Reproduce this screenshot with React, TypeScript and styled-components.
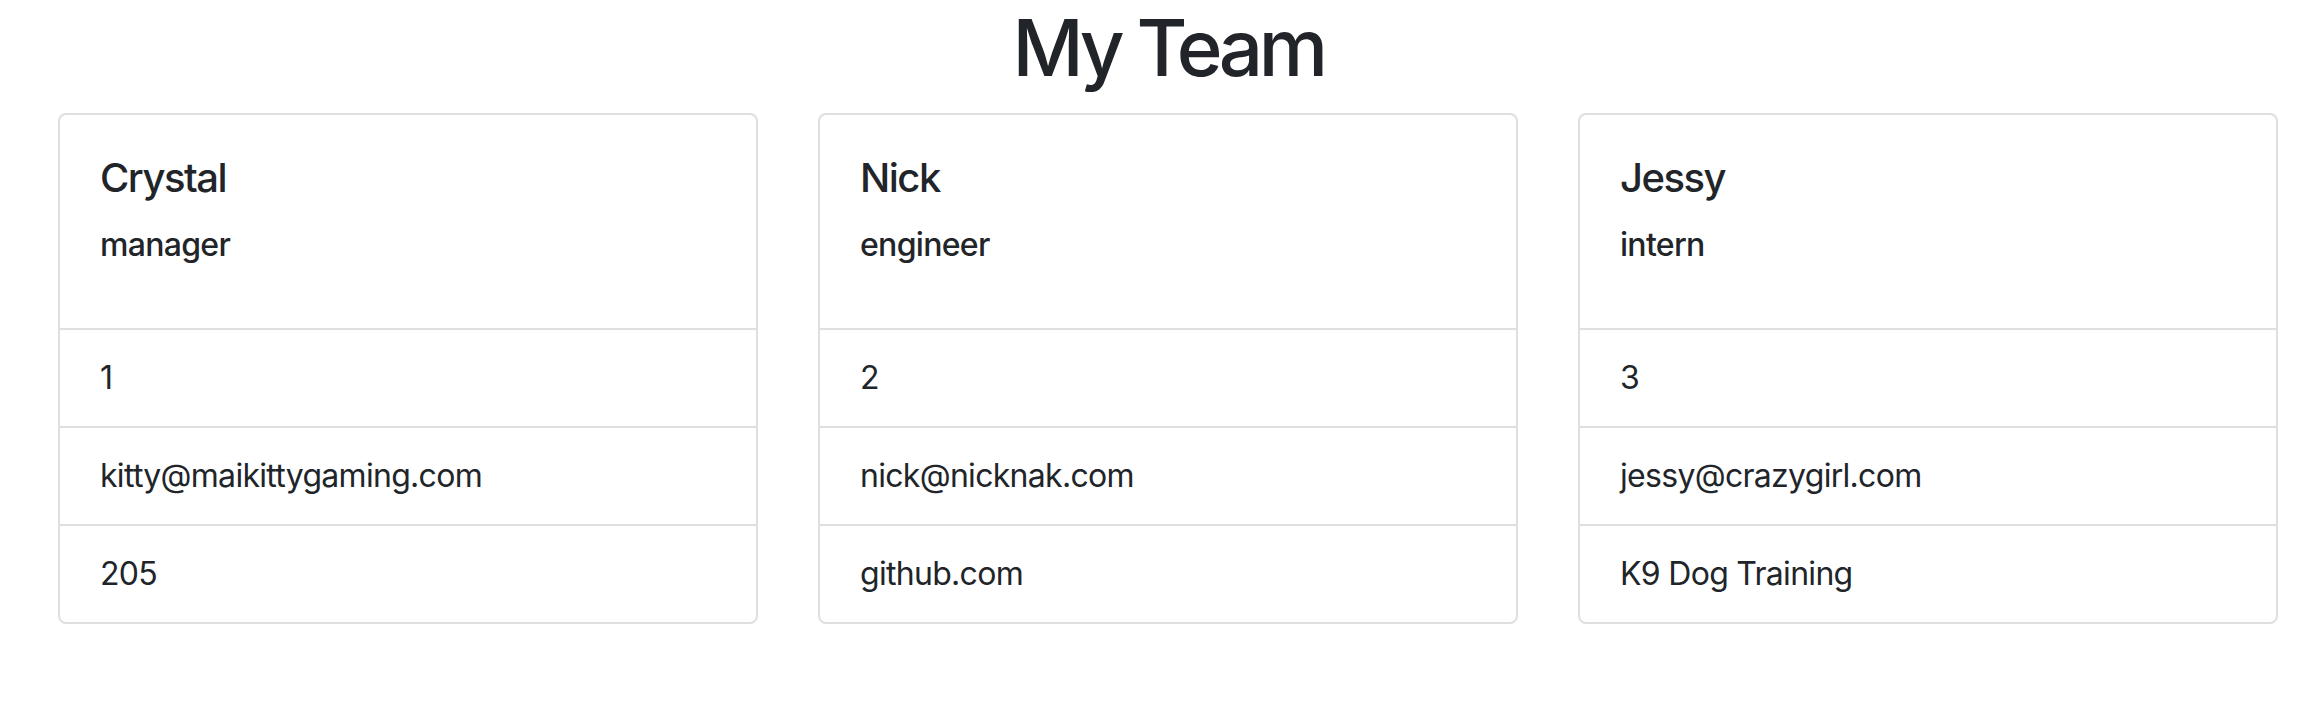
import React from 'react';
import styled, { createGlobalStyle } from 'styled-components';

interface Member {
  name: string;
  role: string;
  id: number;
  email: string;
  extra: string;
}

const GlobalStyle = createGlobalStyle`
  html, body {
    margin: 0;
    padding: 0;
    background: #fff;
  }
  body {
    font-family: Inter, "Liberation Sans", Arial, sans-serif;
    color: #212529;
  }
`;

const Page = styled.div`
  padding: 0 36px 0 58px;
`;

const Title = styled.h1`
  margin: 0 0 17px;
  font-size: 78px;
  line-height: 96px;
  font-weight: 500;
  text-align: center;
  letter-spacing: -4.5px;
`;

const Cards = styled.div`
  display: grid;
  grid-template-columns: repeat(3, 1fr);
  gap: 60px;
`;

const Card = styled.div`
  display: flex;
  flex-direction: column;
  border: 2px solid #dfdfdf;
  border-radius: 8px;
  background: #fff;
`;

const CardBody = styled.div`
  padding: 39px 40px 64px;
`;

const Name = styled.h5`
  margin: 0 0 24px;
  font-size: 40px;
  line-height: 48px;
  font-weight: 500;
  letter-spacing: -1.5px;
`;

const Role = styled.h6`
  margin: 0;
  font-size: 32px;
  line-height: 38px;
  font-weight: 500;
  letter-spacing: -0.7px;
`;

const List = styled.ul`
  margin: 0;
  padding: 0;
  list-style: none;
`;

const Item = styled.li`
  padding: 24px 40px;
  font-size: 32px;
  line-height: 48px;
  letter-spacing: -0.7px;
  border-top: 2px solid #dfdfdf;
`;

const TEAM: Member[] = [
  { name: 'Crystal', role: 'manager', id: 1, email: 'kitty@maikittygaming.com', extra: '205' },
  { name: 'Nick', role: 'engineer', id: 2, email: 'nick@nicknak.com', extra: 'github.com' },
  { name: 'Jessy', role: 'intern', id: 3, email: 'jessy@crazygirl.com', extra: 'K9 Dog Training' },
];

const App: React.FC = () => {
  const renderCard = (member: Member) => (
    <Card key={member.id}>
      <CardBody>
        <Name>{member.name}</Name>
        <Role>{member.role}</Role>
      </CardBody>
      <List>
        <Item>{member.id}</Item>
        <Item>{member.email}</Item>
        <Item>{member.extra}</Item>
      </List>
    </Card>
  );

  return (
    <>
      <GlobalStyle />
      <Page>
        <Title>My Team</Title>
        <Cards>{TEAM.map(renderCard)}</Cards>
      </Page>
    </>
  );
};

export default App;
